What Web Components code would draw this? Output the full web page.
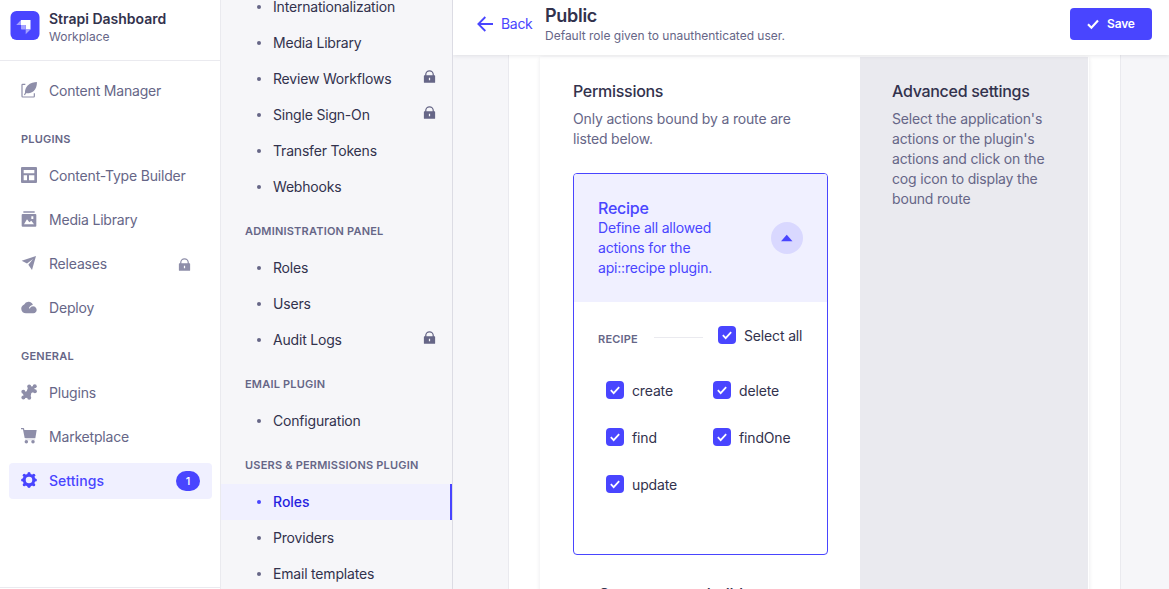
<!DOCTYPE html>
<html lang="en">
<head>
<meta charset="utf-8">
<title>Strapi Dashboard</title>
<style>
    html, body { margin: 0; height: 100%; overflow: hidden; }
    body {
        --neutral100: #f6f6f9;
        --neutral150: #eaeaef;
        --neutral200: #dcdce4;
        --neutral500: #8e8ea9;
        --neutral600: #666687;
        --neutral800: #32324d;
        --primary100: #f0f0ff;
        --primary200: #d9d8ff;
        --primary600: #4945ff;
        --primary700: #271fe0;
        font-family: Inter, "Liberation Sans", sans-serif;
        font-size: 14px;
        line-height: 20px;
        letter-spacing: -.19px;
        color: var(--neutral800);
    }
</style>
</head>
<body>
<admin-layout>
    <main-nav slot="nav" heading="Strapi Dashboard" workplace="Workplace">
        <nav-link icon="write">Content Manager</nav-link>
        <nav-section label="Plugins">
            <nav-link icon="layout">Content-Type Builder</nav-link>
            <nav-link icon="picture">Media Library</nav-link>
            <nav-link icon="plane" locked>Releases</nav-link>
            <nav-link icon="cloud">Deploy</nav-link>
        </nav-section>
        <nav-section label="General">
            <nav-link icon="puzzle">Plugins</nav-link>
            <nav-link icon="cart">Marketplace</nav-link>
            <nav-link icon="cog" active badge="1">Settings</nav-link>
        </nav-section>
    </main-nav>

    <sub-nav slot="subnav">
        <sub-nav-section>
            <sub-nav-link>Internationalization</sub-nav-link>
            <sub-nav-link>Media Library</sub-nav-link>
            <sub-nav-link locked>Review Workflows</sub-nav-link>
            <sub-nav-link locked>Single Sign-On</sub-nav-link>
            <sub-nav-link>Transfer Tokens</sub-nav-link>
            <sub-nav-link>Webhooks</sub-nav-link>
        </sub-nav-section>
        <sub-nav-section label="Administration panel">
            <sub-nav-link>Roles</sub-nav-link>
            <sub-nav-link>Users</sub-nav-link>
            <sub-nav-link locked>Audit Logs</sub-nav-link>
        </sub-nav-section>
        <sub-nav-section label="Email plugin">
            <sub-nav-link>Configuration</sub-nav-link>
        </sub-nav-section>
        <sub-nav-section label="Users &amp; Permissions plugin">
            <sub-nav-link active>Roles</sub-nav-link>
            <sub-nav-link>Providers</sub-nav-link>
            <sub-nav-link>Email templates</sub-nav-link>
        </sub-nav-section>
    </sub-nav>

    <page-header heading="Public" subtitle="Default role given to unauthenticated user.">
        <save-button slot="action">Save</save-button>
    </page-header>
    <role-panel>
        <text-block heading="Permissions">Only actions bound by a route are listed below.</text-block>
        <plugin-accordion open heading="Recipe" description="Define all allowed actions for the api::recipe plugin.">
            <permission-group label="Recipe">
                <check-box>create</check-box>
                <check-box>delete</check-box>
                <check-box>find</check-box>
                <check-box>findOne</check-box>
                <check-box>update</check-box>
            </permission-group>
        </plugin-accordion>
        <plugin-accordion heading="Content types builder"></plugin-accordion>
        <text-block slot="aside" heading="Advanced settings">Select the application's actions or the plugin's actions and click on the cog icon to display the bound route</text-block>
    </role-panel>
</admin-layout>

<script>
const ICONS = {
    write: '<path d="M6.500 3.500H2.500a1 1 0 0 0-1 1V21.500a1 1 0 0 0 1 1h16.500a1 1 0 0 0 1-1V17" fill="none" stroke="currentColor" stroke-width="1.800"/><path d="M23.800 0C20 0 14 1.200 10 5.200 7 8.200 5.600 13 6 16l-1.600 3.200 1.500.7 1.700-3c3.500.4 8.400-.4 11.600-3.500C22.800 9.800 24.200 4 23.800 0z"/>',
    layout: '<path fill-rule="evenodd" d="M1.500 0h21A1.500 1.500 0 0 1 24 1.500v21a1.500 1.500 0 0 1-1.500 1.500h-21A1.500 1.500 0 0 1 0 22.500v-21A1.500 1.500 0 0 1 1.500 0zM4 4.500v5h16v-5H4zm0 8V20h5v-7.500H4zm8 0V20h8v-7.500h-8z"/>',
    picture: '<path opacity=".75" d="M3.500 0h17v3h-17z"/><path fill-rule="evenodd" d="M2.500 4.500h19A1.500 1.500 0 0 1 23 6v16a1.500 1.500 0 0 1-1.500 1.500h-19A1.500 1.500 0 0 1 1 22V6a1.500 1.500 0 0 1 1.500-1.500zm13 3.500v4h3V8h-3zM4.500 20h15l-4-5.500-3 2.500-3.500-4.500L4.500 20z"/>',
    plane: '<path d="M22.500 1.500 1 8.500l8 4.200L18 6l-7 8.500 5.500 8z"/>',
    cloud: '<path fill-rule="evenodd" d="M7.500 21.500h10.800a5.200 5.200 0 0 0 4.700-7.300A5.400 5.400 0 0 0 18.200 11c-2.500 0-4 1.300-4.800 3.200l-1.600-.5c1-2.800 3.200-4.400 6-4.700A7 7 0 0 0 4.800 8.300C1.900 9.500.2 12 .4 15c.2 3.900 3.300 6.500 7.100 6.500z"/>',
    puzzle: '<path d="m11 4 8-.500 2.500 7.500-6 2.500-1.500 7-9 .500-2.500-8 6-2z"/><circle cx="12.300" cy="3.700" r="3"/><circle cx="20.600" cy="3.500" r="3"/><circle cx="20.800" cy="11" r="3"/><circle cx="3.500" cy="11.800" r="3"/><circle cx="3.600" cy="20.300" r="3"/><circle cx="12.300" cy="20.500" r="3"/>',
    cart: '<path d="M0 0h3.600a1 1 0 0 1 1 .8L5 3h18.500l-2 12.500H7.500L5.500 15 2.900 2H0V0z"/><path d="M6 17h15v1.500H6z" opacity=".3"/><circle cx="8" cy="20.700" r="2.600"/><circle cx="18" cy="20.700" r="2.600"/>',
    cog: '<circle cx="12" cy="12" r="7.200" fill="none" stroke="currentColor" stroke-width="4.600"/><circle cx="12" cy="2.500" r="2.400"/><circle cx="12" cy="21.500" r="2.400"/><circle cx="2.500" cy="12" r="2.400"/><circle cx="21.500" cy="12" r="2.400"/><circle cx="5" cy="5" r="2.400"/><circle cx="19" cy="5" r="2.400"/><circle cx="5" cy="19" r="2.400"/><circle cx="19" cy="19" r="2.400"/>',
    lock: '<path d="M19 10h1a1 1 0 0 1 1 1v10a1 1 0 0 1-1 1H4a1 1 0 0 1-1-1V11a1 1 0 0 1 1-1h1V9a7 7 0 0 1 14 0v1zm-2 0V9A5 5 0 0 0 7 9v1h10zm-6 4v4h2v-4h-2z"/>',
    arrow: '<path d="M24 12H2M12.500 1.500 2 12l10.500 10.500" fill="none" stroke="currentColor" stroke-width="2.700"/>',
    check: '<path d="m2 12.500 6.800 7L22 5" fill="none" stroke="currentColor" stroke-width="4.200"/>',
    caret: '<path d="M0 18.500 11.500 5.500 23 18.500z"/>',
    logo: '<rect x=".5" width="29" height="29" rx="6" fill="#4945ff"/><path d="M11 9h9.500v9.500h-4.800V14H11z" fill="#fff"/><path d="M11 9v5H6.200zM15.700 18.500h4.800l-4.800 4.800z" fill="#a5a2ff"/><path d="M11 14h4.700v4.500h-4a.7.700 0 0 1-.7-.7z" fill="#a5a2ff"/>'
};

const icon = (name, size, box = 24) =>
    `<svg width="${size}" height="${size}" viewBox="0 0 ${box} ${box}" fill="currentColor" aria-hidden="true">${ICONS[name]}</svg>`;

class BaseElement extends HTMLElement {
    constructor() {
        super();
        this.attachShadow({ mode: 'open' });
    }

    connectedCallback() {
        this.shadowRoot.innerHTML = `
            <style>
                :host { display: block; box-sizing: border-box; }
                * { box-sizing: border-box; }
                svg { display: block; flex: none; }
                h1, h2, h3, p { margin: 0; }
            </style>
            ${this.render()}
        `;
    }

    attr(name) {
        return this.getAttribute(name) || '';
    }
}

class AdminLayout extends BaseElement {
    render() {
        return `
            <style>
                :host { display: grid; grid-template-columns: 221px 232px 1fr; height: 100vh; overflow: hidden; }
                main { min-width: 0; min-height: 0; display: flex; flex-direction: column; overflow: hidden; background: var(--neutral100); }
            </style>
            <slot name="nav"></slot>
            <slot name="subnav"></slot>
            <main><slot></slot></main>
        `;
    }
}

class MainNav extends BaseElement {
    render() {
        return `
            <style>
                :host { display: flex; flex-direction: column; height: 100vh; background: #fff; border-right: 1px solid var(--neutral150); }
                header { display: flex; gap: 9px; padding: 10px 10px 0; height: 61px; border-bottom: 1px solid var(--neutral150); letter-spacing: 0; }
                svg { margin-top: 1px; }
                h2 { font-size: 14px; line-height: 18px; font-weight: 600; }
                p { font-size: 12px; line-height: 18px; color: var(--neutral600); }
                nav { flex: 1; padding: 12px 8px 0 9px; }
                footer { height: 2px; border-top: 1px solid var(--neutral150); }
            </style>
            <header>${icon('logo', 30, 30)}<div><h2>${this.attr('heading')}</h2><p>${this.attr('workplace')}</p></div></header>
            <nav><slot></slot></nav>
            <footer></footer>
        `;
    }
}

class NavSection extends BaseElement {
    render() {
        return `
            <style>
                h3 { padding: 20px 12px 9px; font-size: 11px; line-height: 20px; font-weight: 600; letter-spacing: .22px; text-transform: uppercase; color: var(--neutral600); }
                div { display: flex; flex-direction: column; gap: 8px; }
            </style>
            <h3>${this.attr('label')}</h3>
            <div><slot></slot></div>
        `;
    }
}

class NavLink extends BaseElement {
    render() {
        const active = this.hasAttribute('active');
        return `
            <style>
                :host { display: flex; align-items: center; height: 36px; padding: 0 12px; border-radius: 4px; color: ${active ? 'var(--primary600)' : 'var(--neutral500)'}; background: ${active ? 'var(--primary100)' : 'none'}; }
                .label { flex: 1; padding-left: 12px; color: ${active ? 'inherit' : 'var(--neutral600)'}; ${active ? 'font-weight: 500; letter-spacing: .05px;' : ''} }
                .icon { padding-bottom: 2px; }
                .lock { padding: 1px 8px 0 0; }
                .badge { width: 24px; height: 20px; border-radius: 10px; background: var(--primary600); color: #fff; font-size: 11px; font-weight: 500; line-height: 20px; text-align: center; }
            </style>
            <span class="icon">${icon(this.attr('icon'), 16)}</span>
            <span class="label"><slot></slot></span>
            ${this.hasAttribute('locked') ? `<span class="lock">${icon('lock', 15)}</span>` : ''}
            ${this.hasAttribute('badge') ? `<span class="badge">${this.attr('badge')}</span>` : ''}
        `;
    }
}

class SubNav extends BaseElement {
    render() {
        return `
            <style>
                :host { height: 100vh; overflow: hidden; background: var(--neutral100); border-right: 1px solid var(--neutral200); }
                /* list is scrolled past its first entries */
                div { margin-top: -11px; }
            </style>
            <div><slot></slot></div>
        `;
    }
}

class SubNavSection extends BaseElement {
    render() {
        const label = this.attr('label').replace('&', '&amp;');
        return `
            <style>
                h3 { padding: 16px 24px 9px; font-size: 11px; line-height: 20px; font-weight: 600; letter-spacing: .2px; white-space: nowrap; text-transform: uppercase; color: var(--neutral600); }
            </style>
            ${label ? `<h3>${label}</h3>` : ''}
            <slot></slot>
        `;
    }
}

class SubNavLink extends BaseElement {
    render() {
        const active = this.hasAttribute('active');
        return `
            <style>
                :host { display: flex; align-items: center; height: 36px; padding: 0 ${active ? 0 : 15}px 0 36px; ${active ? 'background: var(--primary100); border-right: 2px solid var(--primary600); color: var(--primary700); font-weight: 500; letter-spacing: 0;' : ''} }
                i { width: 4px; height: 4px; border-radius: 50%; background: ${active ? 'var(--primary600)' : 'var(--neutral600)'}; }
                .label { flex: 1; padding-left: 12px; }
                .lock { color: var(--neutral600); padding-bottom: 5px; }
            </style>
            <i></i>
            <span class="label"><slot></slot></span>
            ${this.hasAttribute('locked') ? `<span class="lock">${icon('lock', 15)}</span>` : ''}
        `;
    }
}

class PageHeader extends BaseElement {
    render() {
        return `
            <style>
                :host { position: relative; z-index: 1; flex: none; display: flex; height: 55px; padding: 0 17px 0 24px; background: #fff; box-shadow: 0 1px 4px rgba(33, 33, 52, .1); }
                .back { display: flex; align-items: center; gap: 8px; width: 56px; height: 20px; margin: 14px 12px 0 0; color: var(--primary600); letter-spacing: -.3px; }
                .title { flex: 1; padding-top: 5px; }
                h1 { font-size: 18px; line-height: 22px; font-weight: 600; letter-spacing: -.3px; }
                p { font-size: 12px; line-height: 17px; letter-spacing: -.01px; color: var(--neutral600); }
            </style>
            <div class="back">${icon('arrow', 16)}<span>Back</span></div>
            <div class="title"><h1>${this.attr('heading')}</h1><p>${this.attr('subtitle')}</p></div>
            <slot name="action"></slot>
        `;
    }
}

class SaveButton extends BaseElement {
    render() {
        return `
            <style>
                :host { display: flex; align-items: center; gap: 8px; width: 82px; height: 32px; margin-top: 8px; padding-left: 17px; border-radius: 4px; background: var(--primary600); color: #fff; font-size: 12px; font-weight: 600; letter-spacing: -.15px; }
            </style>
            ${icon('check', 12)}<span><slot></slot></span>
        `;
    }
}

class RolePanel extends BaseElement {
    render() {
        return `
            <style>
                :host { flex: 1; min-height: 0; margin: 0 48px 0 55px; padding: 2px 31px 0; background: #fff; border: solid var(--neutral150); border-width: 0 1px; overflow: hidden; }
                .card { display: grid; grid-template-columns: 320px 228px; height: 700px; box-shadow: 0 1px 4px rgba(33, 33, 52, .1); }
                .main { padding: 24px 32px 0 33px; }
                .aside { padding: 24px 32px 0; background: var(--neutral150); }
            </style>
            <div class="card">
                <div class="main"><slot></slot></div>
                <div class="aside"><slot name="aside"></slot></div>
            </div>
        `;
    }
}

class TextBlock extends BaseElement {
    render() {
        return `
            <style>
                h2 { font-size: 16px; line-height: 20px; font-weight: 500; letter-spacing: -.29px; padding-bottom: 8px; }
                p { color: var(--neutral600); letter-spacing: -.17px; }
            </style>
            <h2>${this.attr('heading')}</h2>
            <p><slot></slot></p>
        `;
    }
}

class PluginAccordion extends BaseElement {
    render() {
        const open = this.hasAttribute('open');
        return `
            <style>
                :host { border: 1px solid ${open ? 'var(--primary600)' : '#fff'}; border-radius: 4px; overflow: hidden; ${open ? 'height: 382px; margin: 24px 0 0;' : ''} }
                header { display: flex; align-items: ${open ? 'center' : 'flex-start'}; padding: 24px; ${open ? 'height: 128px; background: var(--primary100); color: var(--primary600);' : 'padding-top: 28px;'} }
                .text { flex: 1; white-space: ${open ? 'normal' : 'nowrap'}; }
                h3 { font-size: 16px; line-height: 20px; font-weight: 500; letter-spacing: -.25px; }
                .toggle { display: grid; place-items: center; width: 32px; height: 32px; margin: ${open ? 0 : 8}px 0 0 24px; border-radius: 50%; background: ${open ? 'var(--primary200)' : 'var(--neutral150)'}; }
            </style>
            <header>
                <div class="text"><h3>${this.attr('heading')}</h3><p>${this.attr('description')}</p></div>
                <span class="toggle">${icon('caret', 12)}</span>
            </header>
            <slot></slot>
        `;
    }
}

class PermissionGroup extends BaseElement {
    render() {
        return `
            <style>
                :host { padding: 24px; }
                .head { display: flex; align-items: center; height: 20px; }
                .head check-box { width: 85px; }
                .label { width: 40px; font-size: 11px; font-weight: 600; letter-spacing: .2px; text-transform: uppercase; color: var(--neutral600); padding-top: 6px; }
                hr { flex: 1; height: 1px; margin: 3px 15px 0 16px; border: 0; background: var(--neutral150); }
                .grid { display: grid; grid-template-columns: 107px 1fr; row-gap: 27px; padding: 35px 0 0 8px; }
            </style>
            <div class="head"><span class="label">${this.attr('label')}</span><hr><check-box>Select all</check-box></div>
            <div class="grid"><slot></slot></div>
        `;
    }
}

class CheckBox extends BaseElement {
    render() {
        return `
            <style>
                :host { display: flex; gap: 8px; height: 20px; white-space: nowrap; letter-spacing: -.15px; }
                .box { display: grid; place-items: center; width: 18px; height: 18px; border-radius: 4px; background: var(--primary600); color: #fff; }
            </style>
            <span class="box">${icon('check', 10)}</span><span><slot></slot></span>
        `;
    }
}

customElements.define('admin-layout', AdminLayout);
customElements.define('main-nav', MainNav);
customElements.define('nav-section', NavSection);
customElements.define('nav-link', NavLink);
customElements.define('sub-nav', SubNav);
customElements.define('sub-nav-section', SubNavSection);
customElements.define('sub-nav-link', SubNavLink);
customElements.define('page-header', PageHeader);
customElements.define('save-button', SaveButton);
customElements.define('role-panel', RolePanel);
customElements.define('text-block', TextBlock);
customElements.define('plugin-accordion', PluginAccordion);
customElements.define('permission-group', PermissionGroup);
customElements.define('check-box', CheckBox);
</script>
</body>
</html>
